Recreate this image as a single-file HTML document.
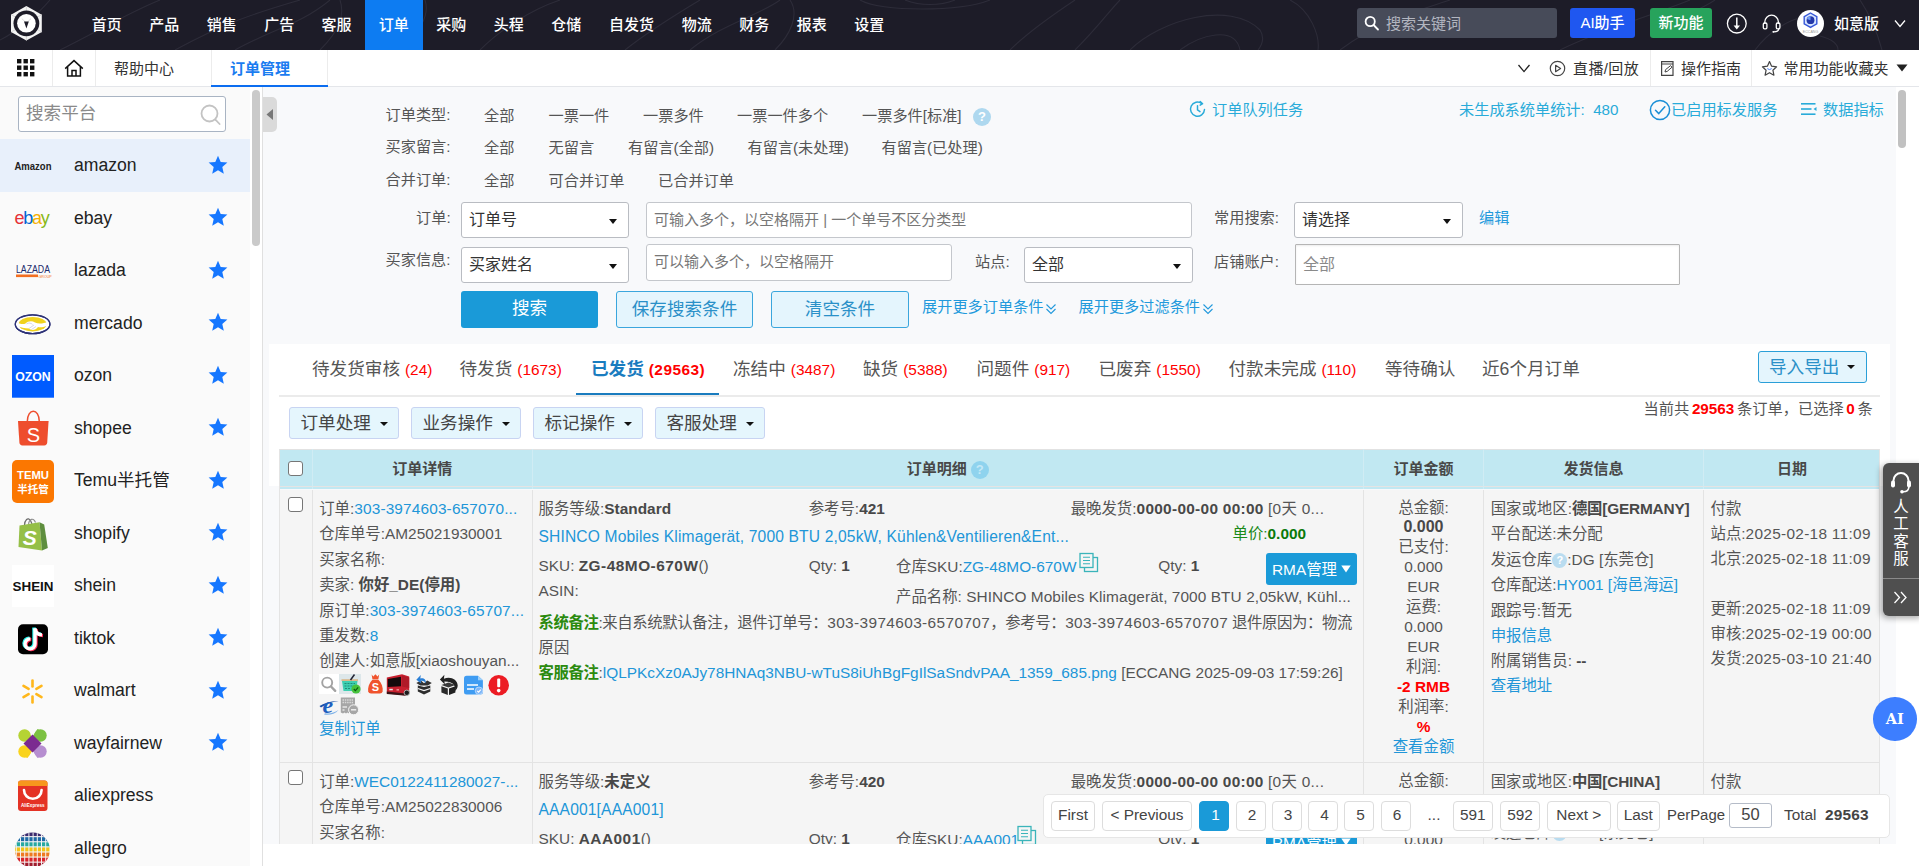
<!DOCTYPE html>
<html lang="zh-CN">
<head>
<meta charset="utf-8">
<title>订单管理</title>
<style>
*{box-sizing:border-box;margin:0;padding:0}
html,body{width:1919px;height:866px;overflow:hidden;background:#fff}
body{font-family:"Liberation Sans","Noto Sans CJK SC",sans-serif;font-size:15.4px;color:#333;position:relative}
a{color:#2196d8;text-decoration:none}
.abs{position:absolute}
/* top nav */
#nav{position:absolute;left:0;top:0;width:1919px;height:50px;background:#1d1c28;overflow:hidden}
#nav .it{position:absolute;top:0;height:50px;line-height:50px;color:#fff;font-size:15px;font-weight:500;text-align:center;white-space:nowrap}
#nav .act{background:#0d7cf2}
/* sub bar */
#sub{position:absolute;left:0;top:50px;width:1919px;height:37px;background:#fff;border-bottom:1px solid #e4e6ea}
#sub .t{position:absolute;top:1px;height:36px;line-height:36px;font-size:15px;color:#333;white-space:nowrap}
#sub .sep{position:absolute;top:0;width:1px;height:36px;background:#ececec}
/* sidebar */
#side{position:absolute;left:0;top:87px;width:250px;height:779px;background:#fafafa;overflow:hidden}
#side .row{position:absolute;left:0;width:250px;height:52.5px}
#side .row .nm{position:absolute;left:74px;top:0;line-height:52.5px;font-size:17.6px;color:#222;white-space:nowrap}
#side .row .st{position:absolute;left:208px;top:15.500px;width:20px;height:20px}
#side .row .lg{position:absolute;left:12px;top:5.5px;width:42px;height:42px}
</style>
</head>
<body>
<!-- ============ TOP NAV ============ -->
<div id="nav">
  <svg class="abs" style="left:0;top:0" width="1919" height="50" viewBox="0 0 1919 50" fill="none" stroke="#2d2c39" stroke-width="1.100">
    <path d="M0 40 C20 30 40 12 50 0"/><path d="M60 50 C100 30 130 12 160 0"/><path d="M175 50 C230 20 260 12 300 0"/><path d="M235 50 C270 30 300 25 330 0"/>
    <path d="M320 50 C340 30 345 15 340 0"/><path d="M395 50 C420 35 430 15 425 0"/><path d="M480 50 C500 30 530 10 560 0"/>
    <path d="M625 50 C650 30 680 12 700 0"/><path d="M690 50 C720 25 760 15 780 0"/><path d="M775 50 C790 35 800 15 790 0"/>
    <path d="M860 0 C880 12 960 12 990 0"/><path d="M905 0 C920 6 940 6 955 0"/><path d="M1010 50 C1030 30 1060 10 1075 0"/>
    <path d="M1075 50 C1100 25 1110 10 1120 0"/><path d="M1130 50 C1160 20 1230 0 1260 30 C1265 38 1262 45 1258 50"/><path d="M1180 50 C1200 35 1235 25 1240 50"/>
    <path d="M1290 0 C1310 10 1320 35 1318 50"/><path d="M1340 50 C1380 20 1420 10 1450 0"/><path d="M1560 50 C1600 30 1640 20 1690 0"/>
    <path d="M1715 0 C1700 10 1690 12 1680 18"/><path d="M1755 50 C1770 30 1790 20 1800 18"/><path d="M1820 36 C1835 40 1838 46 1838 50"/><path d="M1860 0 C1870 15 1878 35 1882 50"/>
  </svg>
  <svg class="abs" style="left:10px;top:5px" width="34" height="37" viewBox="0 0 34 37">
    <path d="M16.400 1 L31.800 9.700 V27 L16.400 35.600 L1 27 V9.700 Z" fill="#f4f4f4"/>
    <path d="M16.400 1 V6 M1 9.700 L5.500 12 M31.800 9.700 L27.300 12 M1 27 L5.500 24.600 M31.800 27 L27.300 24.600 M16.400 35.600 V31" stroke="#cfcfcf" stroke-width="0.800"/>
    <circle cx="16.400" cy="18.300" r="12.900" fill="#1d1c28"/>
    <circle cx="16.400" cy="18.300" r="9.300" fill="#fff"/>
    <path d="M16.400 18 L11.800 13.600 M16.400 18 L21 13.600" stroke="#d9d9d9" stroke-width="0.900"/>
    <path d="M14 16.600 L18.800 16.600 L16.400 23.500 Z" fill="#1d1c28"/>
  </svg>
  <div class="it" style="left:78px;width:57.5px">首页</div>
  <div class="it" style="left:135.5px;width:57.5px">产品</div>
  <div class="it" style="left:193px;width:57.5px">销售</div>
  <div class="it" style="left:250.5px;width:57.5px">广告</div>
  <div class="it" style="left:308px;width:57px">客服</div>
  <div class="it act" style="left:365px;width:57.5px">订单</div>
  <div class="it" style="left:422.5px;width:57.5px">采购</div>
  <div class="it" style="left:480px;width:57.5px">头程</div>
  <div class="it" style="left:537.5px;width:57.5px">仓储</div>
  <div class="it" style="left:595px;width:73px">自发货</div>
  <div class="it" style="left:668px;width:57.5px">物流</div>
  <div class="it" style="left:725.5px;width:57.5px">财务</div>
  <div class="it" style="left:783px;width:57.5px">报表</div>
  <div class="it" style="left:840.5px;width:57.5px">设置</div>
  <!-- search -->
  <div class="abs" style="left:1357px;top:8px;width:200px;height:30px;background:#474b59;border-radius:3px"></div>
  <svg class="abs" style="left:1363px;top:14px" width="18" height="18" viewBox="0 0 18 18" fill="none" stroke="#fff" stroke-width="1.8"><circle cx="7.2" cy="7.5" r="4.6"/><path d="M10.6 11 L15 15.5" stroke-linecap="round"/></svg>
  <div class="abs" style="left:1386px;top:8px;line-height:31px;font-size:15px;color:#b3b6c0;white-space:nowrap">搜索关键词</div>
  <div class="abs" style="left:1570px;top:8px;width:65px;height:30px;line-height:30px;background:#1f57f0;border-radius:3px;color:#fff;font-size:15px;font-weight:500;text-align:center">AI助手</div>
  <div class="abs" style="left:1650px;top:8px;width:62px;height:30px;line-height:30px;background:#27a35c;border-radius:3px;color:#fff;font-size:15px;font-weight:500;text-align:center">新功能</div>
  <svg class="abs" style="left:1725px;top:12px" width="24" height="24" viewBox="0 0 24 24" fill="none" stroke="#fff" stroke-width="1.300"><circle cx="11.800" cy="11.600" r="9.400"/><path d="M11.800 5.500 V14.500" stroke-width="1.500"/><path d="M8.600 13.600 H15 L11.800 17.400 Z" fill="#fff" stroke="none"/></svg>
  <svg class="abs" style="left:1760px;top:12px" width="24" height="24" viewBox="0 0 24 24" fill="none" stroke="#fff" stroke-width="1.300"><path d="M4.800 12 V10 A6.800 6.800 0 0 1 18.400 10 V12"/><rect x="3.300" y="11" width="3.600" height="5.800" rx="1.200"/><rect x="16.300" y="11" width="3.600" height="5.800" rx="1.200"/><path d="M18.800 16.800 C18.800 19.200 16.500 19.800 13.800 19.800" stroke-linecap="round"/><circle cx="13.300" cy="19.800" r="0.900" fill="#fff" stroke="none"/></svg>
  <div class="abs" style="left:1796.5px;top:10px;width:27px;height:27px;border-radius:50%;background:#fff"></div>
  <svg class="abs" style="left:1797px;top:10px" width="27" height="27" viewBox="0 0 27 27"><path d="M13.500 3 L19.800 6.600 V13.800 L13.500 17.400 L7.200 13.800 V6.600 Z" fill="#d6e4ff" stroke="#3556d8" stroke-width="1.400"/><circle cx="13.500" cy="10.200" r="3.900" fill="#2438a8"/><path d="M13.500 10.200 L13.500 6.300 A3.900 3.900 0 0 0 9.800 9 Z" fill="#6f9bf5"/><text x="13.500" y="22.500" text-anchor="middle" font-size="3.600" fill="#999" font-family="Liberation Sans,sans-serif">ECCANG</text></svg>
  <div class="abs" style="left:1834px;top:0;line-height:47px;color:#fff;font-size:15px;font-weight:500;white-space:nowrap">如意版</div>
  <svg class="abs" style="left:1893px;top:17.500px" width="14" height="12" viewBox="0 0 14 12" fill="none" stroke="#fff" stroke-width="1.3"><path d="M2 2.5 L7 8.5 L12 2.5"/></svg>
</div>
<!-- ============ SUB BAR ============ -->
<div id="sub">
  <svg class="abs" style="left:17px;top:9px" width="18" height="18" viewBox="0 0 18 18" fill="#111"><rect x="0" y="0" width="4.4" height="4.4"/><rect x="6.5" y="0" width="4.4" height="4.4"/><rect x="13" y="0" width="4.4" height="4.4"/><rect x="0" y="6.5" width="4.4" height="4.4"/><rect x="6.5" y="6.5" width="4.4" height="4.4"/><rect x="13" y="6.5" width="4.4" height="4.4"/><rect x="0" y="13" width="4.4" height="4.4"/><rect x="6.5" y="13" width="4.4" height="4.4"/><rect x="13" y="13" width="4.4" height="4.4"/></svg>
  <div class="sep" style="left:52px"></div>
  <svg class="abs" style="left:64px;top:9px" width="20" height="19" viewBox="0 0 20 19" fill="none" stroke="#111" stroke-width="1.5"><path d="M1.2 9.6 L10 1.6 L18.8 9.6" stroke-linejoin="miter"/><path d="M3.6 8 V17 H16.4 V8"/><path d="M8 17 V11.6 H12 V17"/></svg>
  <div class="sep" style="left:95px"></div>
  <div class="t" style="left:114px">帮助中心</div>
  <div class="sep" style="left:211px"></div>
  <div class="t" style="left:230px;color:#1a7cf0;font-weight:700">订单管理</div>
  <div class="sep" style="left:327px"></div>
  <div class="abs" style="left:211px;top:34.5px;width:117px;height:2.5px;background:#0b6df0"></div>
  <svg class="abs" style="left:1517px;top:13px" width="14" height="12" viewBox="0 0 14 12" fill="none" stroke="#222" stroke-width="1.3"><path d="M1.5 2 L7 8.6 L12.5 2"/></svg>
  <svg class="abs" style="left:1549px;top:10px" width="17" height="17" viewBox="0 0 17 17" fill="none" stroke="#444" stroke-width="1.2"><circle cx="8.5" cy="8.5" r="7.2"/><path d="M6.6 5.3 L11.6 8.5 L6.6 11.7 Z" stroke-linejoin="round"/></svg>
  <div class="t" style="left:1573px;letter-spacing:.4px">直播/回放</div>
  <div class="sep" style="left:1650px"></div>
  <svg class="abs" style="left:1660px;top:10px" width="16" height="17" viewBox="0 0 16 17" fill="none" stroke="#444" stroke-width="1.2"><path d="M1.6 1.6 H13 V15.4 H1.6 Z M1.6 4 H13"/><path d="M5 12 L5.6 9.6 L10.6 5.6 L12 7.2 L7.2 11.4 Z" stroke-width="1"/></svg>
  <div class="t" style="left:1681px">操作指南</div>
  <div class="sep" style="left:1751px"></div>
  <svg class="abs" style="left:1761px;top:10px" width="17" height="17" viewBox="0 0 17 17" fill="none" stroke="#444" stroke-width="1.2"><path d="M8.5 1.6 L10.6 6.2 L15.6 6.8 L11.9 10.2 L12.9 15.2 L8.5 12.7 L4.1 15.2 L5.1 10.2 L1.4 6.8 L6.4 6.2 Z" stroke-linejoin="round"/><path d="M6.3 8.6 Q8.5 10.6 10.7 8.6" stroke-width="1" stroke="#4a7df0"/></svg>
  <div class="t" style="left:1783.5px">常用功能收藏夹</div>
  <svg class="abs" style="left:1896px;top:14px" width="12" height="8" viewBox="0 0 12 8" fill="#222"><path d="M0.5 0.5 H11.5 L6 7.5 Z"/></svg>
</div>
<!--SIDE-->
<div id="side">
<div class="abs" style="left:18px;top:9px;width:208px;height:36px;border:1px solid #a9b4c3;border-radius:3px;background:#fff"></div>
<div class="abs" style="left:26px;top:9px;line-height:35px;font-size:17.6px;color:#8a8a8a;white-space:nowrap">搜索平台</div>
<svg class="abs" style="left:199px;top:16px" width="23" height="23" viewBox="0 0 23 23" fill="none" stroke="#c3c3c3" stroke-width="1.8"><circle cx="10.500" cy="10.500" r="8"/><path d="M16.4 16.6 L20.6 21" stroke-linecap="round"/></svg>
<div class="row" style="top:52.0px;background:#e8f0fb"><svg class="lg" viewBox="0 0 42 42" style="overflow:visible"><text x="21" y="24.5" text-anchor="middle" font-size="11.5" font-weight="700" fill="#222" textLength="37" lengthAdjust="spacingAndGlyphs">Amazon</text></svg><div class="nm">amazon</div><svg class="st" viewBox="0 0 20 20"><path d="M10 0.8 L12.7 7 L19.4 7.6 L14.3 12.1 L15.8 18.7 L10 15.2 L4.2 18.7 L5.700 12.1 L0.6 7.6 L7.3 7 Z" fill="#1677ff"/></svg></div>
<div class="row" style="top:104.5px"><svg class="lg" viewBox="0 0 42 42" style="overflow:visible"><text x="2.5" y="26.5" font-size="18" letter-spacing="-1.3" font-weight="400"><tspan fill="#e53238">e</tspan><tspan fill="#0064d2">b</tspan><tspan fill="#f5af02">a</tspan><tspan fill="#86b817">y</tspan></text></svg><div class="nm">ebay</div><svg class="st" viewBox="0 0 20 20"><path d="M10 0.8 L12.7 7 L19.4 7.6 L14.3 12.1 L15.8 18.7 L10 15.2 L4.2 18.7 L5.700 12.1 L0.6 7.6 L7.3 7 Z" fill="#1677ff"/></svg></div>
<div class="row" style="top:157.0px"><svg class="lg" viewBox="0 0 42 42" style="overflow:visible"><text x="21" y="23" text-anchor="middle" font-size="10" fill="#1a2a6c" textLength="34" lengthAdjust="spacingAndGlyphs">LAZADA</text><rect x="4" y="24.5" width="22" height="2.6" fill="#f36f21"/><text x="26.5" y="27.5" font-size="3.6" fill="#f36f21">GROUP</text></svg><div class="nm">lazada</div><svg class="st" viewBox="0 0 20 20"><path d="M10 0.8 L12.7 7 L19.4 7.6 L14.3 12.1 L15.8 18.7 L10 15.2 L4.2 18.7 L5.700 12.1 L0.6 7.6 L7.3 7 Z" fill="#1677ff"/></svg></div>
<div class="row" style="top:209.5px"><svg class="lg" viewBox="0 0 42 42" style="overflow:visible"><ellipse cx="20.600" cy="22.200" rx="17.300" ry="9.400" fill="#fff" stroke="#2d3277" stroke-width="1.300"/><ellipse cx="20.600" cy="22.200" rx="14" ry="7.300" fill="#f0d21c"/><path d="M4.500 20.500 C8 22 11 22.500 13.500 21.500 C16 19 20 18.500 23 20.500 C26 22 31 22 36.500 19.500 L36.800 23 C32 25.500 28 25.500 26 25 C24 28 19.500 29 17 26.500 C13 26.500 8 25.500 4.500 23.500 Z" fill="#fff"/><path d="M17 26.500 L22 23 M19.500 27.500 L24 24.500 M14.500 21.800 C17 20.500 19 21 20.500 22.500" stroke="#b9bdd6" stroke-width="0.600" fill="none"/><ellipse cx="20.600" cy="22.200" rx="17.300" ry="9.400" fill="none" stroke="#2d3277" stroke-width="1.300"/></svg><div class="nm">mercado</div><svg class="st" viewBox="0 0 20 20"><path d="M10 0.8 L12.7 7 L19.4 7.6 L14.3 12.1 L15.8 18.7 L10 15.2 L4.2 18.7 L5.700 12.1 L0.6 7.6 L7.3 7 Z" fill="#1677ff"/></svg></div>
<div class="row" style="top:262.0px"><svg class="lg" viewBox="0 0 42 42" style="overflow:visible"><rect x="0" y="0" width="42" height="42.700" fill="#005bff"/><text x="21" y="26" text-anchor="middle" font-size="13.5" font-weight="700" fill="#fff" textLength="35.5" lengthAdjust="spacingAndGlyphs">OZON</text></svg><div class="nm">ozon</div><svg class="st" viewBox="0 0 20 20"><path d="M10 0.8 L12.7 7 L19.4 7.6 L14.3 12.1 L15.8 18.7 L10 15.2 L4.2 18.7 L5.700 12.1 L0.6 7.6 L7.3 7 Z" fill="#1677ff"/></svg></div>
<div class="row" style="top:314.5px"><svg class="lg" viewBox="0 0 42 42" style="overflow:visible"><path d="M15.300 14.500 C15.300 0.800 27.300 0.800 27.300 14.500" fill="none" stroke="#ee4d2d" stroke-width="1.500"/><path d="M6 14 H36.600 L35.200 35.600 Q35 38.400 32.200 38.400 H10.400 Q7.600 38.400 7.400 35.600 Z" fill="#ee4d2d"/><text x="21.300" y="34.500" text-anchor="middle" font-size="20" fill="#fff">S</text></svg><div class="nm">shopee</div><svg class="st" viewBox="0 0 20 20"><path d="M10 0.8 L12.7 7 L19.4 7.6 L14.3 12.1 L15.8 18.7 L10 15.2 L4.2 18.7 L5.700 12.1 L0.6 7.6 L7.3 7 Z" fill="#1677ff"/></svg></div>
<div class="row" style="top:367.0px"><svg class="lg" viewBox="0 0 42 42" style="overflow:visible"><rect x="0" y="0" width="42" height="43" rx="5" fill="#fb7701"/><text x="21" y="19" text-anchor="middle" font-size="11.5" font-weight="700" fill="#fff" textLength="32" lengthAdjust="spacingAndGlyphs">TEMU</text><text x="21" y="33" text-anchor="middle" font-size="10.5" font-weight="700" fill="#fff">半托管</text></svg><div class="nm">Temu半托管</div><svg class="st" viewBox="0 0 20 20"><path d="M10 0.8 L12.7 7 L19.4 7.6 L14.3 12.1 L15.8 18.7 L10 15.2 L4.2 18.7 L5.700 12.1 L0.6 7.6 L7.3 7 Z" fill="#1677ff"/></svg></div>
<div class="row" style="top:419.5px"><svg class="lg" viewBox="0 0 42 42" style="overflow:visible"><path d="M12.500 13.500 C12.500 8 16 4.500 18.500 8.500 L20 12" fill="none" stroke="#6b6b6b" stroke-width="1.200"/><path d="M16.500 12.500 C17 7 21.500 5 23.500 10.500" fill="none" stroke="#8e8e8e" stroke-width="1.100"/><path d="M7.500 13.500 L27.500 10.300 L30 38.600 L6.500 35 Z" fill="#95bf47"/><path d="M27.500 10.300 L32.200 12.500 L35.800 36 L30 38.600 Z" fill="#5e8e3e"/><text x="17.800" y="32.500" text-anchor="middle" font-size="21" font-weight="700" font-style="italic" fill="#fff">S</text></svg><div class="nm">shopify</div><svg class="st" viewBox="0 0 20 20"><path d="M10 0.8 L12.7 7 L19.4 7.6 L14.3 12.1 L15.8 18.7 L10 15.2 L4.2 18.7 L5.700 12.1 L0.6 7.6 L7.3 7 Z" fill="#1677ff"/></svg></div>
<div class="row" style="top:472.0px"><svg class="lg" viewBox="0 0 42 42" style="overflow:visible"><rect x="0" y="0" width="42" height="42" fill="#fff"/><text x="21" y="25.5" text-anchor="middle" font-size="12" font-weight="700" fill="#111" textLength="41" lengthAdjust="spacingAndGlyphs">SHEIN</text></svg><div class="nm">shein</div><svg class="st" viewBox="0 0 20 20"><path d="M10 0.8 L12.7 7 L19.4 7.6 L14.3 12.1 L15.8 18.7 L10 15.2 L4.2 18.7 L5.700 12.1 L0.6 7.6 L7.3 7 Z" fill="#1677ff"/></svg></div>
<div class="row" style="top:524.5px"><svg class="lg" viewBox="0 0 42 42" style="overflow:visible"><rect x="6" y="7.200" width="30" height="30" rx="5" fill="#000"/><g transform="translate(0,0.700)"><path d="M23 10.500 V26 A5 5 0 1 1 18.300 21.200" fill="none" stroke="#25f4ee" stroke-width="3.400" transform="translate(-1,-0.700)"/><path d="M23 11 C23.600 15 26.500 17 30 17.200" fill="none" stroke="#25f4ee" stroke-width="3.400" transform="translate(-1,-0.700)"/><path d="M23 10.500 V26 A5 5 0 1 1 18.300 21.200" fill="none" stroke="#fe2c55" stroke-width="3.400" transform="translate(1,0.700)"/><path d="M23 11 C23.600 15 26.500 17 30 17.200" fill="none" stroke="#fe2c55" stroke-width="3.400" transform="translate(1,0.700)"/><path d="M23 10.500 V26 A5 5 0 1 1 18.300 21.200" fill="none" stroke="#fff" stroke-width="3.400"/><path d="M23 11 C23.600 15 26.500 17 30 17.200" fill="none" stroke="#fff" stroke-width="3.400"/></g></svg><div class="nm">tiktok</div><svg class="st" viewBox="0 0 20 20"><path d="M10 0.8 L12.7 7 L19.4 7.6 L14.3 12.1 L15.8 18.7 L10 15.2 L4.2 18.7 L5.700 12.1 L0.6 7.6 L7.3 7 Z" fill="#1677ff"/></svg></div>
<div class="row" style="top:577.0px"><svg class="lg" viewBox="0 0 42 42" style="overflow:visible"><g stroke="#ffb71b" stroke-width="2.6" stroke-linecap="round"><path d="M20.5 10.5 V16.5"/><path d="M20.5 26.5 V32.5"/><path d="M11.5 15.8 L16.6 18.8"/><path d="M24.4 24.2 L29.5 27.2"/><path d="M29.5 15.8 L24.4 18.8"/><path d="M16.6 24.2 L11.5 27.2"/></g></svg><div class="nm">walmart</div><svg class="st" viewBox="0 0 20 20"><path d="M10 0.8 L12.7 7 L19.4 7.6 L14.3 12.1 L15.8 18.7 L10 15.2 L4.2 18.7 L5.700 12.1 L0.6 7.6 L7.3 7 Z" fill="#1677ff"/></svg></div>
<div class="row" style="top:629.5px"><svg class="lg" viewBox="0 0 42 42" style="overflow:visible"><g transform="translate(20.5,21.5)"><path d="M0 0 L-7 -7 L-10.5 -12 L-5 -14.5 L0 -7 Z" fill="#b5d334" transform="rotate(-8)"/><path d="M0 0 L7 -7 L10.5 -12 L5 -14.5 L0 -7 Z" fill="#7cc142"/><path d="M0 0 L-7 7 L-10.5 12 L-5 14.5 L0 7 Z" fill="#f9d31c"/><path d="M0 0 L7 7 L10.5 12 L5 14.5 L0 7 Z" fill="#b68ed0"/><path d="M-13.5 -5 L-7 -7 L0 0 L-7 7 L-13.5 5 Z" fill="#b5d334" opacity="0"/><circle cx="-8" cy="-8" r="6.2" fill="#b5d334"/><circle cx="8" cy="-8" r="6.2" fill="#7cc142"/><circle cx="-8" cy="8" r="6.2" fill="#f9d31c"/><circle cx="8" cy="8" r="6.2" fill="#b68ed0"/><path d="M0 -9 L9 0 L0 9 L-9 0 Z" fill="#7b2a90"/></g></svg><div class="nm">wayfairnew</div><svg class="st" viewBox="0 0 20 20"><path d="M10 0.8 L12.7 7 L19.4 7.6 L14.3 12.1 L15.8 18.7 L10 15.2 L4.2 18.7 L5.700 12.1 L0.6 7.6 L7.3 7 Z" fill="#1677ff"/></svg></div>
<div class="row" style="top:682.0px"><svg class="lg" viewBox="0 0 42 42" style="overflow:visible"><rect x="6" y="5.5" width="29.5" height="30.5" rx="3" fill="#e43225"/><path d="M6 11 V8.5 Q6 5.5 9 5.5 H32.5 Q35.500 5.500 35.500 8.500 V11 Z" fill="#f7971d"/><path d="M12 15 A8.8 8.8 0 0 0 29.600 15" fill="none" stroke="#fff" stroke-width="2.600" stroke-linecap="round"/><text x="20.8" y="32" text-anchor="middle" font-size="4.6" fill="#fff" font-weight="700">AliExpress</text></svg><div class="nm">aliexpress</div></div>
<div class="row" style="top:734.5px"><svg class="lg" viewBox="0 0 42 42" style="overflow:visible"><defs><clipPath id="alc"><circle cx="20.5" cy="23" r="17.500"/></clipPath></defs><g clip-path="url(#alc)"><rect x="2" y="5.0" width="38" height="5.2" fill="#3b2a6e"/><rect x="2" y="10.1" width="38" height="5.2" fill="#1f6aa5"/><rect x="2" y="15.2" width="38" height="5.2" fill="#27a9a1"/><rect x="2" y="20.3" width="38" height="5.2" fill="#f3c316"/><rect x="2" y="25.4" width="38" height="5.2" fill="#ee7a21"/><rect x="2" y="30.5" width="38" height="5.2" fill="#d8242b"/><rect x="2" y="35.6" width="38" height="5.2" fill="#a01d2e"/><rect x="3.8" y="4" width="1" height="38" fill="#f4f4f4"/><rect x="8.0" y="4" width="1" height="38" fill="#f4f4f4"/><rect x="12.2" y="4" width="1" height="38" fill="#f4f4f4"/><rect x="16.4" y="4" width="1" height="38" fill="#f4f4f4"/><rect x="20.6" y="4" width="1" height="38" fill="#f4f4f4"/><rect x="24.8" y="4" width="1" height="38" fill="#f4f4f4"/><rect x="29.0" y="4" width="1" height="38" fill="#f4f4f4"/><rect x="33.2" y="4" width="1" height="38" fill="#f4f4f4"/><rect x="37.4" y="4" width="1" height="38" fill="#f4f4f4"/><rect x="2" y="9.1" width="38" height="1" fill="#f4f4f4"/><rect x="2" y="14.2" width="38" height="1" fill="#f4f4f4"/><rect x="2" y="19.3" width="38" height="1" fill="#f4f4f4"/><rect x="2" y="24.4" width="38" height="1" fill="#f4f4f4"/><rect x="2" y="29.5" width="38" height="1" fill="#f4f4f4"/><rect x="2" y="34.6" width="38" height="1" fill="#f4f4f4"/><rect x="2" y="39.7" width="38" height="1" fill="#f4f4f4"/><rect x="2" y="44.8" width="38" height="1" fill="#f4f4f4"/></g></svg><div class="nm">allegro</div></div>
</div>
<div class="abs" style="left:250px;top:87px;width:12px;height:779px;background:#fff"></div>
<div class="abs" style="left:252px;top:90px;width:8px;height:156px;border-radius:4px;background:#cacaca"></div>
<div class="abs" style="left:262px;top:87px;width:1px;height:779px;background:#e0e0e0"></div>
<!--/SIDE-->
<!--MAIN-->
<style>
#main{position:absolute;left:263px;top:87px;width:1633px;height:757px;background:#f8f9fb;overflow:hidden}
#main .l{position:absolute;white-space:nowrap;font-size:15.2px;color:#555;line-height:22px}
#main .b{color:#2299dc}
.sel{position:absolute;height:36px;border:1px solid #b9bcc2;border-radius:3px;background:#fff;font-size:16px;color:#333;line-height:34px;padding-left:7px;white-space:nowrap}
.sel:after{content:"";position:absolute;right:11px;top:15.5px;border:4.5px solid transparent;border-top:5px solid #111;border-bottom:0}
.inp{position:absolute;border:1px solid #c4c7cc;border-radius:3px;background:#fff;font-size:15px;color:#777;padding-left:7px;white-space:nowrap}
.btn2{position:absolute;height:37px;line-height:34px;border:1px solid #3aa6dd;border-radius:3px;background:#e4f5fd;color:#2a90c8;font-size:17.6px;text-align:center;white-space:nowrap}
</style>
<div id="main">
  <!-- collapse handle -->
  <div class="abs" style="left:0;top:10px;width:14px;height:35px;background:#dadada;border-radius:0 5px 5px 0"></div>
  <svg class="abs" style="left:2px;top:21px" width="9" height="13" viewBox="0 0 9 13"><path d="M8 1 V12 L1.5 6.500 Z" fill="#777"/></svg>
  <!-- row 1 -->
  <div class="l" style="left:122.500px;top:17px">订单类型:</div>
  <div class="l" style="left:221px;top:18px">全部</div>
  <div class="l" style="left:285.500px;top:18px">一票一件</div>
  <div class="l" style="left:380px;top:18px">一票多件</div>
  <div class="l" style="left:474px;top:18px">一票一件多个</div>
  <div class="l" style="left:599px;top:18px">一票多件[标准]</div>
  <div class="abs" style="left:710px;top:21px;width:18px;height:18px;border-radius:50%;background:#aed8ef;color:#fff;font-size:13px;font-weight:700;line-height:18px;text-align:center">?</div>
  <!-- row 2 -->
  <div class="l" style="left:122.500px;top:49px">买家留言:</div>
  <div class="l" style="left:221px;top:49.500px">全部</div>
  <div class="l" style="left:285.500px;top:49.500px">无留言</div>
  <div class="l" style="left:365px;top:49.500px">有留言(全部)</div>
  <div class="l" style="left:484.500px;top:49.500px">有留言(未处理)</div>
  <div class="l" style="left:618.500px;top:49.500px">有留言(已处理)</div>
  <!-- row 3 -->
  <div class="l" style="left:122.500px;top:82px">合并订单:</div>
  <div class="l" style="left:221px;top:82.500px">全部</div>
  <div class="l" style="left:285.500px;top:82.500px">可合并订单</div>
  <div class="l" style="left:395px;top:82.500px">已合并订单</div>
  <!-- right links -->
  <svg class="abs" style="left:925px;top:13px" width="19" height="19" viewBox="0 0 19 19" fill="none" stroke="#29abd9" stroke-width="1.500" stroke-linecap="round"><path d="M13.800 3.600 A7 7 0 1 0 16.500 9.500"/><path d="M12.200 1.600 L14.600 3.700 L12.200 5.200" stroke-linejoin="round"/><path d="M9.500 5.800 V9.900 L12 11.600"/></svg>
  <div class="l b" style="left:949px;top:12px;color:#29abd9">订单队列任务</div>
  <div class="l b" style="left:1196px;top:12px;color:#29abd9">未生成系统单统计:&nbsp; 480</div>
  <svg class="abs" style="left:1386px;top:12px" width="22" height="22" viewBox="0 0 22 22" fill="none" stroke="#1a8fd6" stroke-width="1.500"><circle cx="11" cy="11" r="9.600"/><path d="M6.500 11.300 L9.800 14.600 L15.800 7.800" stroke-linecap="round" stroke-linejoin="round"/></svg>
  <div class="l b" style="left:1408px;top:12px;color:#29abd9">已启用标发服务</div>
  <svg class="abs" style="left:1538px;top:15px" width="16" height="14" viewBox="0 0 16 14" fill="#29abd9"><rect x="0" y="1" width="14.500" height="1.600"/><rect x="0" y="6.200" width="10.500" height="1.600"/><rect x="0" y="11.400" width="14.500" height="1.600"/><path d="M15.500 5 V9 L12.500 7 Z"/></svg>
  <div class="l b" style="left:1560px;top:12px;color:#29abd9">数据指标</div>
  <!-- row 4 -->
  <div class="l" style="left:153px;top:120px">订单:</div>
  <div class="sel" style="left:198px;top:115px;width:168px">订单号</div>
  <div class="inp" style="left:383px;top:115px;width:546px;height:36px;line-height:33px">可输入多个，以空格隔开 | 一个单号不区分类型</div>
  <div class="l" style="left:951px;top:120px">常用搜索:</div>
  <div class="sel" style="left:1031px;top:115px;width:169px">请选择</div>
  <div class="l b" style="left:1216px;top:120px">编辑</div>
  <!-- row 5 -->
  <div class="l" style="left:122.500px;top:162px">买家信息:</div>
  <div class="sel" style="left:198px;top:160px;width:168px">买家姓名</div>
  <div class="inp" style="left:383px;top:157px;width:306px;height:37px;line-height:34px">可以输入多个，以空格隔开</div>
  <div class="l" style="left:712px;top:164px">站点:</div>
  <div class="sel" style="left:761px;top:160px;width:169px">全部</div>
  <div class="l" style="left:951px;top:164px">店铺账户:</div>
  <div class="inp" style="left:1032px;top:157px;width:385px;height:41px;line-height:40px;font-size:16px;color:#8a8a8a;border-color:#b5b5b5;border-radius:1px;box-shadow:inset 0 1px 2px rgba(0,0,0,.08)">全部</div>
  <!-- buttons -->
  <div class="abs" style="left:198px;top:204px;width:137px;height:37px;line-height:35px;border-radius:3px;background:#1a9ad8;color:#fff;font-size:17.6px;text-align:center">搜索</div>
  <div class="btn2" style="left:353px;top:204px;width:137px">保存搜索条件</div>
  <div class="btn2" style="left:508px;top:204px;width:138px">清空条件</div>
  <div class="l b" style="left:659px;top:209px">展开更多订单条件</div>
  <svg class="abs" style="left:782.200px;top:215.500px" width="12" height="12" viewBox="0 0 12 12" fill="none" stroke="#2299dc" stroke-width="1.100"><path d="M1.500 1.500 L6 6 L10.500 1.500 M1.500 6 L6 10.500 L10.500 6"/></svg>
  <div class="l b" style="left:815.500px;top:209px">展开更多过滤条件</div>
  <svg class="abs" style="left:939.200px;top:215.500px" width="12" height="12" viewBox="0 0 12 12" fill="none" stroke="#2299dc" stroke-width="1.100"><path d="M1.500 1.500 L6 6 L10.500 1.500 M1.500 6 L6 10.500 L10.500 6"/></svg>
<!--PANEL-->
<style>
#panel{position:absolute;left:6px;top:257px;width:1621px;height:142px;background:#fff}
.tab{position:absolute;top:12px;height:36px;line-height:26px;font-size:17.6px;color:#555;white-space:nowrap}
.tab i{font-style:normal;font-size:15.4px;color:#f00;margin-left:5px}
.tbtn{position:absolute;top:63px;height:32px;line-height:30px;border:1px solid #c8d4f2;border-radius:3px;background:#e5f6fd;font-size:17.6px;color:#444;padding-left:10.500px;white-space:nowrap}
.tbtn:after{content:"";position:absolute;right:10px;top:13.500px;border:4px solid transparent;border-top:4.500px solid #111;border-bottom:0}
#tbl{position:absolute;left:16px;top:362px;width:1601px;height:400px}
#tbl .th{position:absolute;top:0;height:40px;line-height:37px;padding-top:1px;background:linear-gradient(#e2e2e2 0,#e2e2e2 1px,#c1e8f2 1px,#c1e8f2 37px,#e4e4e4 37px,#e4e4e4 38px,#c1e8f2 38px);text-align:center;font-weight:700;font-size:15px;color:#484848}
#tbl .td{position:absolute;background:#f5f5f5;overflow:hidden}
.c1,.c4,.c5{font-size:15.4px;color:#444;white-space:nowrap}
.ln{position:absolute;left:0;white-space:nowrap;font-size:15.4px;color:#555;line-height:24px}
.ln b{color:#484848}
.ls{letter-spacing:.3px}
.l1{letter-spacing:.15px}
.cb{position:absolute;width:15px;height:15px;border:1.500px solid #767676;border-radius:3px;background:#fff}
.q{display:inline-block;width:15px;height:15px;border-radius:50%;background:#b9dcf0;color:#fff;font-size:11px;font-weight:700;line-height:15px;text-align:center;vertical-align:1px}
</style>
<div id="panel">
  <div class="tab" style="left:43px">待发货审核<i>(24)</i></div>
  <div class="tab" style="left:190.500px">待发货<i>(1673)</i></div>
  <div class="tab" style="left:322px;color:#1a7cbf;font-weight:700">已发货<i style="font-weight:700;letter-spacing:.45px">(29563)</i></div>
  <div class="tab" style="left:464px">冻结中<i>(3487)</i></div>
  <div class="tab" style="left:594px">缺货<i>(5388)</i></div>
  <div class="tab" style="left:707.500px">问题件<i>(917)</i></div>
  <div class="tab" style="left:829.500px">已废弃<i>(1550)</i></div>
  <div class="tab" style="left:959.500px">付款未完成<i>(110)</i></div>
  <div class="tab" style="left:1116px">等待确认</div>
  <div class="tab" style="left:1213px">近6个月订单</div>
  <div class="abs" style="left:10px;top:51px;width:1601px;height:2px;background:#ebebeb"></div>
  <div class="abs" style="left:307px;top:48.500px;width:143px;height:2.500px;background:#1a7cbf"></div>
  <div class="abs" style="left:1489px;top:7px;width:109px;height:32px;line-height:30px;border:1px solid #2a9fd8;border-radius:3px;background:#e4f5fd;color:#2a90c8;font-size:17.6px;padding-left:10px;white-space:nowrap">导入导出<span style="position:absolute;right:11px;top:13px;border:4px solid transparent;border-top:4.500px solid #111;border-bottom:0"></span></div>
  <div class="abs cnt" style="left:1374.500px;top:54px;line-height:22px;font-size:15.250px;color:#555;white-space:nowrap;word-spacing:-1.600px">当前共 <b style="color:#f00">29563</b> 条订单，已选择 <b style="color:#f00">0</b> 条</div>
  <div class="tbtn" style="left:20px;width:110px">订单处理</div>
  <div class="tbtn" style="left:142px;width:110px">业务操作</div>
  <div class="tbtn" style="left:264px;width:110px">标记操作</div>
  <div class="tbtn" style="left:386px;width:110px">客服处理</div>
</div>
<div id="tbl">
<!--TBL-->
<div class="th" style="left:0.0px;width:33.0px;"></div>
<div class="th" style="left:33.0px;width:219.5px;border-left:1px solid #d0ecf4;">订单详情</div>
<div class="th" style="left:252.5px;width:831.5px;border-left:1px solid #d0ecf4;">订单明细 <span class="q" style="background:#8fd3ee;color:#c4e8f6;width:18px;height:18px;line-height:18px;font-size:13px;vertical-align:0">?</span></div>
<div class="th" style="left:1084.0px;width:120.0px;border-left:1px solid #d0ecf4;">订单金额</div>
<div class="th" style="left:1204.0px;width:220.0px;border-left:1px solid #d0ecf4;">发货信息</div>
<div class="th" style="left:1424.0px;width:177.0px;border-left:1px solid #d0ecf4;">日期</div>
<div class="cb" style="left:9px;top:11.500px"></div>
<div class="td" style="left:0.0px;top:40.5px;width:33.0px;height:273.0px;border-bottom:1px solid #e3e3e3">
<div class="cb" style="left:9px;top:7.500px"></div>
</div>
<div class="td" style="left:33.0px;top:40.5px;width:219.5px;height:273.0px;border-left:1px solid #e3e3e3;border-bottom:1px solid #e3e3e3">
<div class="ln" style="left:6.2px;top:7.0px;">订单:<a class="l1">303-3974603-657070...</a></div>
<div class="ln" style="left:6.2px;top:32.5px;">仓库单号:<span>AM25021930001</span></div>
<div class="ln" style="left:6.2px;top:58.0px;">买家名称:</div>
<div class="ln" style="left:6.2px;top:83.3px;">卖家: <b>你好_DE(停用)</b></div>
<div class="ln" style="left:6.2px;top:109.0px;">原订单:<a class="l1">303-3974603-65707...</a></div>
<div class="ln" style="left:6.2px;top:134.0px;">重发数:<a>8</a></div>
<div class="ln" style="left:6.2px;top:159.0px;">创建人:如意版[xiaoshouyan...</div>
<svg class="abs" style="left:6px;top:184.5px" width="200" height="42" viewBox="0 0 200 42">
<g><rect x="0" y="0" width="20" height="20" fill="#fff"/><circle cx="8.200" cy="8.600" r="5" fill="none" stroke="#a3a3a3" stroke-width="1.900"/><path d="M12 12.500 L16.200 16.800" stroke="#a3a3a3" stroke-width="2.400" stroke-linecap="round"/></g>
<g transform="translate(20,0)"><rect x="0" y="0" width="22" height="20" fill="#dde7ea"/><path d="M2.500 5.200 H19 V7 H2.500 Z" fill="#d9b98c"/><path d="M3 7 H18.500 L17 17 H4.500 Z" fill="#3ecfb2"/><path d="M11.500 6 L15.500 0.500" stroke="#223" stroke-width="1.500"/><path d="M5.500 9.500 H16 M5.500 12 H15 M6 14.500 H12" stroke="#1f8f7a" stroke-width="1" stroke-dasharray="2 1"/><circle cx="17" cy="15" r="4.600" fill="#46c23c"/><path d="M14.800 15 L16.400 16.700 L19.200 13.300" stroke="#0a5a10" stroke-width="1.200" fill="none"/></g>
<g transform="translate(48.800,0)"><path d="M3.800 0.500 L5.500 2.500 L7.600 0.300 L9.700 2.500 L11.400 0.500 L10.600 5 H4.600 Z" fill="#f0532d"/><path d="M4.800 5.500 H10.400 C13.800 9 15.500 13.500 14.800 17.500 Q14.400 19.600 12 19.600 H3.200 Q0.800 19.600 0.400 17.500 C-0.300 13.500 1.400 9 4.800 5.500 Z" fill="#f0532d"/><text x="7.600" y="17" text-anchor="middle" font-size="11" font-weight="700" fill="#fff" font-family="Liberation Sans Narrow,Liberation Sans,sans-serif">S</text></g>
<g transform="translate(67.500,0)"><path d="M0.300 3.500 L15.500 0.300 L22.700 2.500 V17.500 L19.500 21.500 L0.300 19.500 Z" fill="#c8202f"/><path d="M1.300 5 L14.500 2.800 V12.300 L1.300 13 Z" fill="#150a0c"/><path d="M15.500 1.500 L22.700 3.500 V14 L15.500 12.500 Z" fill="#b01a28"/><path d="M0.300 17.500 L19 19.500 L19.500 21.800 L0.300 20 Z" fill="#3a1418"/><circle cx="20.300" cy="18.800" r="2.700" fill="#1c1c1c" stroke="#b9b9b9" stroke-width="0.900"/><rect x="2.800" y="14.800" width="3.500" height="1.500" fill="#e9e9e9"/><rect x="10" y="15.200" width="2.500" height="1.300" fill="#f3a0a0"/></g>
<g transform="translate(96.800,0)"><path d="M0.500 9 L5 6.500 L8.200 9.300 L11.400 6.500 L16 9 L12 11.500 H4.500 Z" fill="#333"/><path d="M2 11.500 L8.200 13 L14.500 11.500 V17.500 L8.200 20.500 L2 17.500 Z" fill="#2d2d2d"/><path d="M2 14.500 L8.200 16.500 L14.500 14.500" stroke="#f5f5f5" stroke-width="1.200" fill="none"/><path d="M10 9.500 C10.500 5.500 8 3.800 4.500 4.500 L5 1 L0.500 5.800 L5.500 9.500 L5 6.800 C7.500 6.500 9 7.300 10 9.500 Z" fill="#2a7fd6"/></g>
<g transform="translate(120.900,0)"><path d="M1.500 11 L8.500 8.500 L15.500 11 L8.500 13.500 Z" fill="#3a3a3a"/><path d="M1.500 12.200 L7.900 14.500 V21 L1.500 18.500 Z" fill="#2b2b2b"/><path d="M15.500 12.200 L9.100 14.500 V21 L15.500 18.500 Z" fill="#222"/><path d="M4 4.800 C10 2 17.500 5 17.800 11.500 C17.800 14 16.500 16 15 17 C16 13.500 15 7.500 4.500 7.500 L5 10.500 L0 5.500 L4.500 0.800 Z" fill="#222"/></g>
<g transform="translate(145,1.800)"><path d="M2.500 0 H14 L18.900 4.500 V16.300 Q18.900 18.800 16.400 18.800 H2.500 Q0 18.800 0 16.300 V2.500 Q0 0 2.500 0 Z" fill="#3f9cf2"/><path d="M14 0 V4.500 H18.900 Z" fill="#9dd0fb"/><path d="M3 9.200 H14 M3 13.200 H10" stroke="#fff" stroke-width="1.700"/><circle cx="15" cy="15" r="3.800" fill="#7fb6f7" stroke="#cfe6ff" stroke-width="0.700"/><path d="M13.200 15 L14.600 16.400 L16.800 13.800" stroke="#fff" stroke-width="1.100" fill="none"/></g>
<g><circle cx="179.700" cy="11.200" r="10.300" fill="#ec1c24"/><rect x="178.200" y="4.500" width="3" height="8.800" rx="1" fill="#fff"/><circle cx="179.700" cy="16.600" r="1.800" fill="#fff"/></g>
<g transform="translate(0,23.600)"><path d="M0.500 8.300 C4.500 6 12 3 19.500 3.300 C13 4.300 6 6.800 2 10 Z" fill="#1b4fa8"/><text x="3.500" y="15.500" font-family="Liberation Serif,serif" font-style="italic" font-weight="700" font-size="24" fill="#1d5fbf">e</text><path d="M6 15.600 C10 16.600 15 15.500 19.500 12.500 C16 17 9 18 5 16.800 Z" fill="#7fb2e8"/></g>
<g transform="translate(21,23)"><path d="M0.800 0.500 H15 V12 H9 V16.500 L7.500 15.500 L6 16.500 L4.500 15.500 L3 16.500 L0.800 15.500 Z" fill="#a6a6a6"/><path d="M2.500 3 H13 M2.500 5.500 H13" stroke="#d9d9d9" stroke-width="1.300" stroke-dasharray="1.500 0.800"/><path d="M2.500 10 H7 M2.500 13 H4.500" stroke="#e6e6e6" stroke-width="1.500"/><circle cx="13.600" cy="12.800" r="5" fill="#a6a6a6" stroke="#f5f5f5" stroke-width="1"/><path d="M11 12.800 H16.200" stroke="#f2f2f2" stroke-width="1.400"/></g>
</svg>
<div class="ln" style="left:6.2px;top:227.0px;"><a>复制订单</a></div>
</div>
<div class="td" style="left:252.5px;top:40.5px;width:831.5px;height:273.0px;border-left:1px solid #e3e3e3;border-bottom:1px solid #e3e3e3">
<div class="ln" style="left:6.0px;top:7.0px;">服务等级:<b>Standard</b></div>
<div class="ln" style="left:276.2px;top:7.0px;">参考号:<b>421</b></div>
<div class="ln" style="left:538.2px;top:7.0px;">最晚发货:<b class="ls">0000-00-00 00:00</b> <span class="ls">[0天 0...</span></div>
<div class="ln" style="left:6.0px;top:35.0px;font-size:15.600px"><a class="l1">SHINCO Mobiles Klimagerät, 7000 BTU 2,05kW, Kühlen&amp;Ventilieren&amp;Ent...</a></div>
<div class="ln" style="left:6.0px;top:64.0px;">SKU: <b style="letter-spacing:.5px">ZG-48MO-670W</b>()</div>
<div class="ln" style="left:276.2px;top:64.0px;">Qty: <b>1</b></div>
<div class="ln" style="left:363.5px;top:65.5px;">仓库SKU:<a>ZG-48MO-670W</a></div>
<div class="ln" style="left:625.7px;top:64.0px;">Qty: <b>1</b></div>
<div class="abs" style="left:733.500px;top:63.500px;width:91px;height:32px;line-height:33px;background:#1a9ad8;border-radius:3px;color:#fff;font-size:15.4px;padding-left:6px;white-space:nowrap">RMA管理<svg style="position:absolute;right:6px;top:12px" width="10" height="8" viewBox="0 0 10 8"><path d="M0.300 0.500 H9.700 L5 7.500 Z" fill="#fff"/></svg></div>
<div class="ln" style="left:700.0px;top:32.0px;"><span style="color:#1a8a1a">单价:<b style="color:#0a7a0a">0.000</b></span></div>
<svg class="abs" style="left:545px;top:62.500px" width="22" height="22" viewBox="0 0 22 22" fill="#f5f5f5" stroke="#3ab4ba" stroke-width="1.300"><rect x="6.500" y="5.500" width="13" height="14"/><rect x="2" y="1.500" width="13" height="14"/><path d="M5 5.300 H12 M5 8.500 H12 M5 11.700 H12" stroke-width="1.100"/></svg>
<div class="ln" style="left:6.0px;top:89.0px;">ASIN:</div>
<div class="ln" style="left:363.5px;top:95.0px;">产品名称: <span style="letter-spacing:.08px">SHINCO Mobiles Klimagerät, 7000 BTU 2,05kW, Kühl...</span></div>
<div class="ln" style="left:6.0px;top:121.5px;"><span style="letter-spacing:-.4px"><b style="color:#2b8a0e">系统备注</b>:来自系统默认备注，退件订单号：<span style="letter-spacing:.38px">303-3974603-6570707</span>，参考号：<span style="letter-spacing:.38px">303-3974603-6570707</span> 退件原因为：物流</span></div>
<div class="ln" style="left:6.0px;top:146.0px;">原因</div>
<div class="ln" style="left:6.0px;top:171.0px;"><b style="color:#2b8a0e;letter-spacing:-.4px">客服备注</b>:<a>lQLPKcXz0AJy78HNAq3NBU-wTuS8iUhBgFgIlSaSndvPAA_1359_685.png</a> [ECCANG 2025-09-03 17:59:26]</div>
</div>
<div class="td" style="left:1084.0px;top:40.5px;width:120.0px;height:273.0px;border-left:1px solid #e3e3e3;border-bottom:1px solid #e3e3e3">
<div class="ln" style="left:0;width:119px;text-align:center;top:8.0px;line-height:20px;">总金额:</div>
<div class="ln" style="left:0;width:119px;text-align:center;top:27.9px;line-height:20px;font-size:16px"><b>0.000</b></div>
<div class="ln" style="left:0;width:119px;text-align:center;top:47.8px;line-height:20px;">已支付:</div>
<div class="ln" style="left:0;width:119px;text-align:center;top:67.8px;line-height:20px;">0.000</div>
<div class="ln" style="left:0;width:119px;text-align:center;top:87.7px;line-height:20px;">EUR</div>
<div class="ln" style="left:0;width:119px;text-align:center;top:107.6px;line-height:20px;">运费:</div>
<div class="ln" style="left:0;width:119px;text-align:center;top:127.5px;line-height:20px;">0.000</div>
<div class="ln" style="left:0;width:119px;text-align:center;top:147.4px;line-height:20px;">EUR</div>
<div class="ln" style="left:0;width:119px;text-align:center;top:167.4px;line-height:20px;">利润:</div>
<div class="ln" style="left:0;width:119px;text-align:center;top:187.3px;line-height:20px;"><b style="color:#f00">-2 RMB</b></div>
<div class="ln" style="left:0;width:119px;text-align:center;top:207.2px;line-height:20px;">利润率:</div>
<div class="ln" style="left:0;width:119px;text-align:center;top:227.1px;line-height:20px;"><b style="color:#f00">%</b></div>
<div class="ln" style="left:0;width:119px;text-align:center;top:247.0px;line-height:20px;"><a>查看金额</a></div>
</div>
<div class="td" style="left:1204.0px;top:40.5px;width:220.0px;height:273.0px;border-left:1px solid #e3e3e3;border-bottom:1px solid #e3e3e3">
<div class="ln" style="left:6.7px;top:7.0px;">国家或地区:<b style="letter-spacing:-.2px">德国[GERMANY]</b></div>
<div class="ln" style="left:6.7px;top:32.5px;">平台配送:未分配</div>
<div class="ln" style="left:6.7px;top:58.0px;">发运仓库<span class="q">?</span>:DG [东莞仓]</div>
<div class="ln" style="left:6.7px;top:83.3px;">仓库配送:<a>HY001 [海邑海运]</a></div>
<div class="ln" style="left:6.7px;top:109.0px;">跟踪号:暂无</div>
<div class="ln" style="left:6.7px;top:134.0px;"><a>申报信息</a></div>
<div class="ln" style="left:6.7px;top:159.0px;">附属销售员: <b>--</b></div>
<div class="ln" style="left:6.7px;top:184.0px;"><a>查看地址</a></div>
</div>
<div class="td" style="left:1424.0px;top:40.5px;width:177.0px;height:273.0px;border-left:1px solid #e3e3e3;border-bottom:1px solid #e3e3e3">
<div class="ln" style="left:6.5px;top:7.0px;">付款</div>
<div class="ln" style="left:6.5px;top:32.0px;">站点:<span class="ls">2025-02-18 11:09</span></div>
<div class="ln" style="left:6.5px;top:57.0px;">北京:<span class="ls">2025-02-18 11:09</span></div>
<div class="ln" style="left:6.5px;top:107.0px;">更新:<span class="ls">2025-02-18 11:09</span></div>
<div class="ln" style="left:6.5px;top:132.0px;">审核:<span class="ls">2025-02-19 00:00</span></div>
<div class="ln" style="left:6.5px;top:157.0px;">发货:<span class="ls">2025-03-10 21:40</span></div>
</div>
<div class="td" style="left:0.0px;top:313.5px;width:33.0px;height:273.0px;border-bottom:1px solid #e3e3e3">
<div class="cb" style="left:9px;top:7.500px"></div>
</div>
<div class="td" style="left:33.0px;top:313.5px;width:219.5px;height:273.0px;border-left:1px solid #e3e3e3;border-bottom:1px solid #e3e3e3">
<div class="ln" style="left:6.2px;top:7.0px;">订单:<a class="">WEC0122411280027-...</a></div>
<div class="ln" style="left:6.2px;top:32.5px;">仓库单号:<span>AM25022830006</span></div>
<div class="ln" style="left:6.2px;top:58.0px;">买家名称:</div>
</div>
<div class="td" style="left:252.5px;top:313.5px;width:831.5px;height:273.0px;border-left:1px solid #e3e3e3;border-bottom:1px solid #e3e3e3">
<div class="ln" style="left:6.0px;top:7.0px;">服务等级:<b>未定义</b></div>
<div class="ln" style="left:276.2px;top:7.0px;">参考号:<b>420</b></div>
<div class="ln" style="left:538.2px;top:7.0px;">最晚发货:<b class="ls">0000-00-00 00:00</b> <span class="ls">[0天 0...</span></div>
<div class="ln" style="left:6.0px;top:35.0px;font-size:15.600px"><a class="l1">AAA001[AAA001]</a></div>
<div class="ln" style="left:6.0px;top:64.0px;">SKU: <b style="letter-spacing:.5px">AAA001</b>()</div>
<div class="ln" style="left:276.2px;top:64.0px;">Qty: <b>1</b></div>
<div class="ln" style="left:363.5px;top:65.5px;">仓库SKU:<a>AAA001</a></div>
<div class="ln" style="left:625.7px;top:64.0px;">Qty: <b>1</b></div>
<div class="abs" style="left:733.500px;top:63.500px;width:91px;height:32px;line-height:33px;background:#1a9ad8;border-radius:3px;color:#fff;font-size:15.4px;padding-left:6px;white-space:nowrap">RMA管理<svg style="position:absolute;right:6px;top:12px" width="10" height="8" viewBox="0 0 10 8"><path d="M0.300 0.500 H9.700 L5 7.500 Z" fill="#fff"/></svg></div>
<svg class="abs" style="left:483px;top:62.500px" width="22" height="22" viewBox="0 0 22 22" fill="#f5f5f5" stroke="#3ab4ba" stroke-width="1.300"><rect x="6.500" y="5.500" width="13" height="14"/><rect x="2" y="1.500" width="13" height="14"/><path d="M5 5.300 H12 M5 8.500 H12 M5 11.700 H12" stroke-width="1.100"/></svg>
</div>
<div class="td" style="left:1084.0px;top:313.5px;width:120.0px;height:273.0px;border-left:1px solid #e3e3e3;border-bottom:1px solid #e3e3e3">
<div class="ln" style="left:0;width:119px;text-align:center;top:8.0px;line-height:20px;">总金额:</div><div class="ln" style="left:0;width:119px;text-align:center;top:67.8px;line-height:20px;">0.000</div>
</div>
<div class="td" style="left:1204.0px;top:313.5px;width:220.0px;height:273.0px;border-left:1px solid #e3e3e3;border-bottom:1px solid #e3e3e3">
<div class="ln" style="left:6.7px;top:7.0px;">国家或地区:<b style="letter-spacing:-.2px">中国[CHINA]</b></div>
<div class="ln" style="left:6.7px;top:32.5px;">平台配送:未分配</div>
<div class="ln" style="left:6.7px;top:58.0px;">发运仓库<span class="q">?</span>:DG [东莞仓]</div>
</div>
<div class="td" style="left:1424.0px;top:313.5px;width:177.0px;height:273.0px;border-left:1px solid #e3e3e3;border-bottom:1px solid #e3e3e3">
<div class="ln" style="left:6.5px;top:7.0px;">付款</div>
</div>
<!--/TBL-->
<div class="abs" style="left:0;top:0;width:1px;height:400px;background:#e4e4e4"></div>
<div class="abs" style="left:1600px;top:0;width:1px;height:400px;background:#e4e4e4"></div>
</div>
<!--/PANEL-->
</div>
<!-- right scrollbar -->
<div class="abs" style="left:1898px;top:90px;width:8px;height:58px;border-radius:4px;background:#c1c1c1"></div>
<!--FLOAT-->
<style>
#pg{position:absolute;left:1043px;top:794.500px;width:1847px;height:43px}
.pb{position:absolute;top:801px;height:29.500px;line-height:25.500px;border:1px solid #ddd;border-radius:4px;background:#fff;font-size:15.4px;color:#444;text-align:center;white-space:nowrap}
</style>
<div class="abs" style="left:1043px;top:794px;width:846.500px;height:43.500px;background:#fff;border:1px solid #e6e6e6;border-radius:5px"></div>
<div class="pb" style="left:1051px;width:44px">First</div>
<div class="pb" style="left:1102px;width:90px">&lt; Previous</div>
<div class="pb" style="left:1199px;width:30px;background:#1a9ad8;border-color:#1a9ad8;color:#fff;text-indent:3px">1</div>
<div class="pb" style="left:1235.500px;width:30px;text-indent:3px">2</div>
<div class="pb" style="left:1271.500px;width:30px;text-indent:3px">3</div>
<div class="pb" style="left:1308px;width:30px;text-indent:3px">4</div>
<div class="pb" style="left:1344px;width:30px;text-indent:3px">5</div>
<div class="pb" style="left:1380.500px;width:30px;text-indent:3px">6</div>
<div class="pb" style="left:1424px;width:20px;border-color:transparent;background:none">...</div>
<div class="pb" style="left:1453px;width:39.500px">591</div>
<div class="pb" style="left:1500px;width:40px">592</div>
<div class="pb" style="left:1547px;width:63.500px">Next &gt;</div>
<div class="pb" style="left:1617px;width:42.500px">Last</div>
<div class="pb" style="left:1666px;border-color:transparent;background:none;font-size:14.900px;line-height:26.500px">PerPage</div>
<div class="pb" style="left:1729px;top:803px;width:43px;height:25px;line-height:21px;border-color:#b5bcc8;border-radius:3px;font-size:16.500px">50</div>
<div class="pb" style="left:1783px;border-color:transparent;background:none">Total&nbsp; <b style="letter-spacing:.2px">29563</b></div>
<!-- 人工客服 -->
<div class="abs" style="left:1882.500px;top:463px;width:40px;height:153px;background:#4f4f4f;border-radius:6px 0 0 6px;box-shadow:-2px 2px 6px rgba(0,0,0,.35)"></div>
<svg class="abs" style="left:1889px;top:470px" width="24" height="26" viewBox="0 0 24 26" fill="none" stroke="#fff" stroke-width="2"><path d="M4.500 13 V10.500 A7.500 7.500 0 0 1 19.500 10.500 V13"/><rect x="2" y="10.500" width="4" height="7" rx="2" fill="#fff" stroke="none"/><rect x="18" y="10.500" width="4" height="7" rx="2" fill="#fff" stroke="none"/><path d="M19.800 17 C19.800 20.500 17 21.800 14 21.800" stroke-width="1.600"/><circle cx="13" cy="21.800" r="1.800" fill="#fff" stroke="none"/></svg>
<div class="abs" style="left:1893px;top:497.500px;width:16px;font-size:15.500px;line-height:17.500px;color:#fff;text-align:center">人工客服</div>
<div class="abs" style="left:1882.500px;top:578px;width:40px;height:1px;background:#8a8a8a"></div>
<svg class="abs" style="left:1893px;top:591px" width="15" height="13" viewBox="0 0 15 13" fill="none" stroke="#fff" stroke-width="1.300"><path d="M1.500 1 L6.500 6.500 L1.500 12 M8 1 L13 6.500 L8 12"/></svg>
<!-- AI -->
<div class="abs" style="left:1873px;top:697px;width:43.500px;height:43.500px;border-radius:50%;background:#3d7eff;color:#fff;font-family:'DejaVu Serif','Liberation Serif',serif;font-weight:700;font-size:14.500px;line-height:43px;text-align:center">AI</div>
<!--/FLOAT-->
<!--/MAIN-->
</body>
</html>
